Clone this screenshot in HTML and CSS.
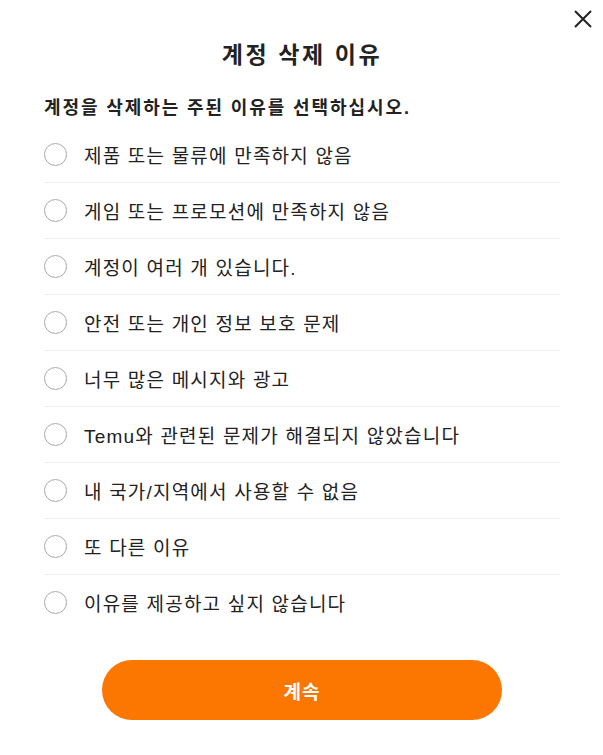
FILE: index.html
```html
<!DOCTYPE html>
<html lang="ko">
<head>
  <meta charset="UTF-8" />
  <title>계정 삭제 이유</title>
  <meta name="viewport" content="width=device-width, initial-scale=1.0"/>
  <link rel="stylesheet" href="styles.css">
</head>
<body>

  <div class="dialog">
    <button class="close" aria-label="닫기">
      <svg width="20" height="20" viewBox="0 0 20 20">
        <path d="M2 2 L18 18 M18 2 L2 18" stroke="#222" stroke-width="2" fill="none"/>
      </svg>
    </button>

    <h1>계정 삭제 이유</h1>
    <p class="lead">계정을 삭제하는 주된 이유를 선택하십시오.</p>

    <ul class="reasons">
      <li><span class="radio"></span>제품 또는 물류에 만족하지 않음</li>
      <li><span class="radio"></span>게임 또는 프로모션에 만족하지 않음</li>
      <li><span class="radio"></span>계정이 여러 개 있습니다.</li>
      <li><span class="radio"></span>안전 또는 개인 정보 보호 문제</li>
      <li><span class="radio"></span>너무 많은 메시지와 광고</li>
      <li><span class="radio"></span>Temu와 관련된 문제가 해결되지 않았습니다</li>
      <li><span class="radio"></span>내 국가/지역에서 사용할 수 없음</li>
      <li><span class="radio"></span>또 다른 이유</li>
      <li><span class="radio"></span>이유를 제공하고 싶지 않습니다</li>
    </ul>

    <button class="btn">계속</button>
  </div>

</body>
</html>
```

FILE: styles.css
```css
body {
  margin: 0;
  background: #fff;
  color: #222;
  font-family: "Liberation Sans", "Noto Sans CJK KR", sans-serif;
}
.dialog {
  position: relative;
  padding: 40px 43px 0 44px;
}
.close {
  position: absolute;
  top: 9px;
  right: 10px;
  background: none;
  border: none;
  padding: 0;
  cursor: pointer;
}
.close svg {
  display: block;
}
h1 {
  margin: 0;
  text-align: center;
  font-size: 23px;
  line-height: 30px;
  letter-spacing: 2.6px;
  font-weight: bold;
}
.lead {
  margin: 26px 0 7px;
  font-size: 18px;
  line-height: 24px;
  letter-spacing: 1.9px;
  font-weight: bold;
}
.reasons {
  list-style: none;
  margin: 0;
  padding: 0;
}
.reasons li {
  display: flex;
  align-items: center;
  gap: 17px;
  height: 55px;
  border-bottom: 1px solid #eee;
  font-size: 19px;
  letter-spacing: 1.2px;
}
.reasons li:last-child {
  border-bottom: none;
}
.radio {
  width: 21px;
  height: 21px;
  border: 1.5px solid #aaa;
  border-radius: 50%;
  flex-shrink: 0;
}
.btn {
  display: block;
  width: 400px;
  height: 60px;
  margin: 30px auto 0 58px;
  background: #fb7701;
  color: #fff;
  border: none;
  border-radius: 30px;
  font-family: inherit;
  font-size: 19px;
  letter-spacing: 1px;
  font-weight: bold;
  cursor: pointer;
}
```
